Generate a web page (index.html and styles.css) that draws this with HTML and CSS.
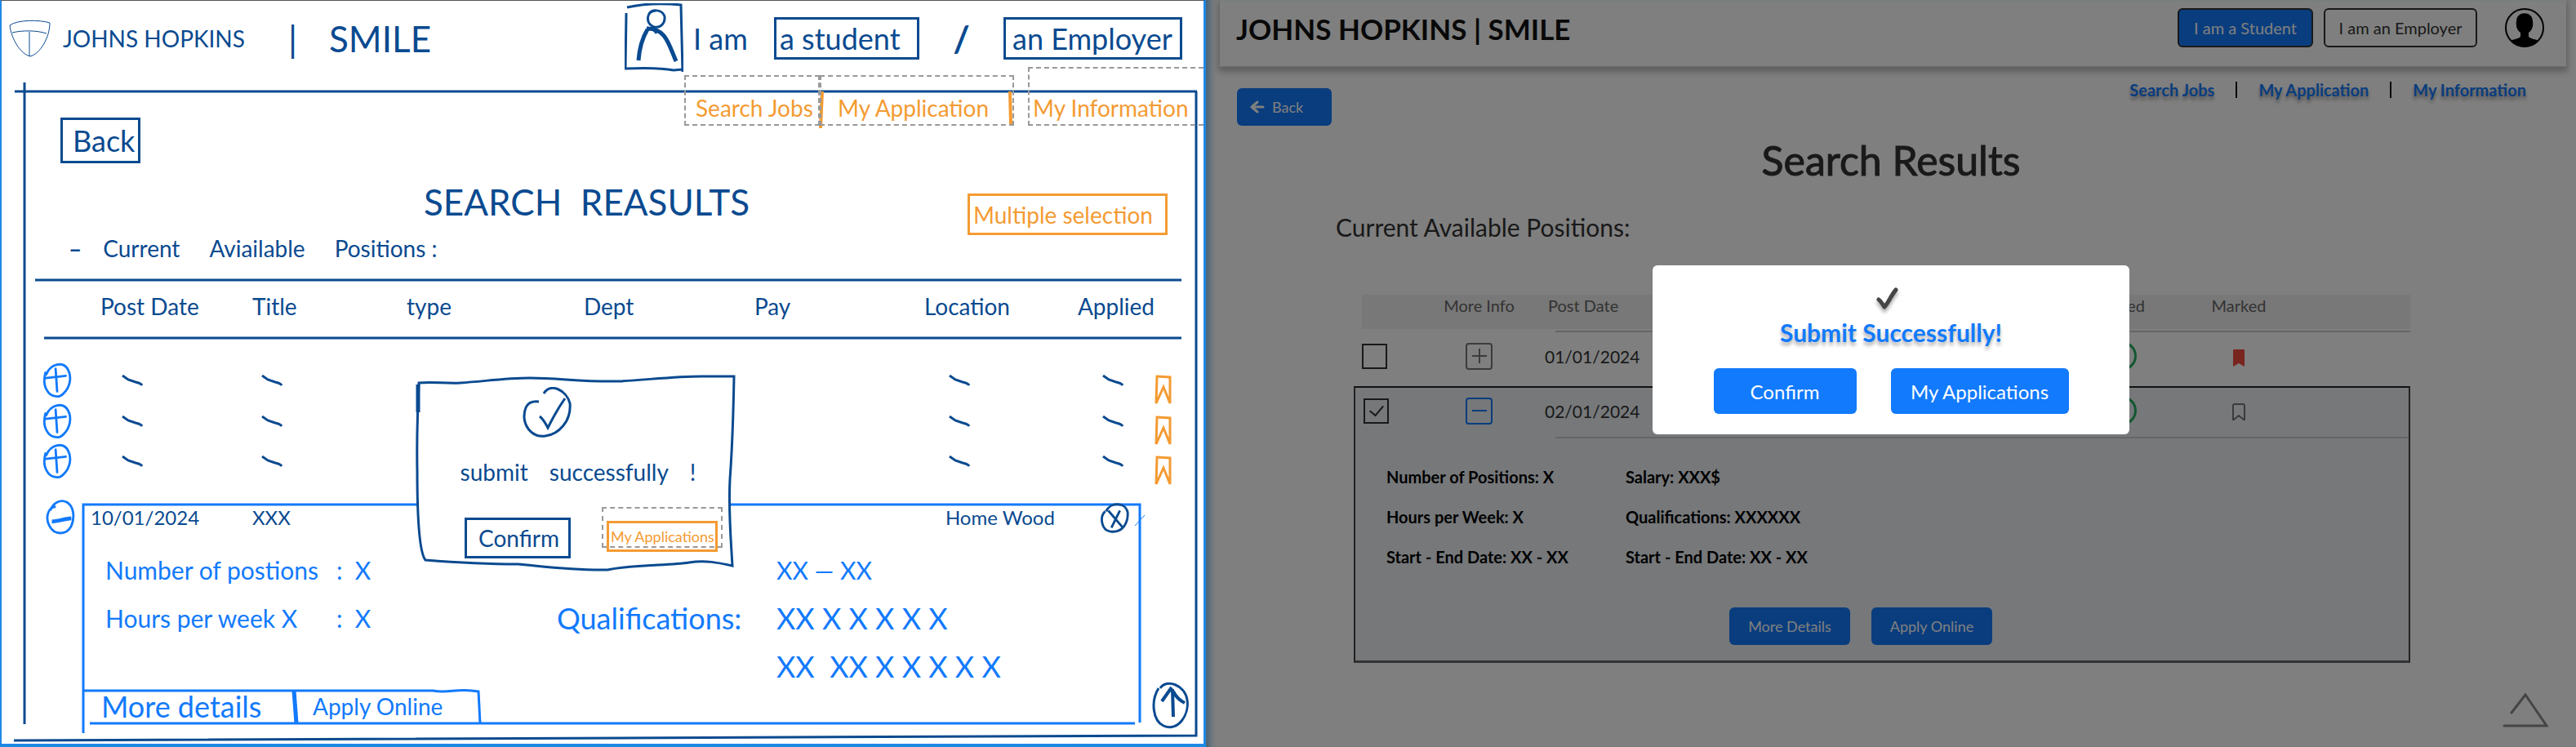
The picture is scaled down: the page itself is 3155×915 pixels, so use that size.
FILE: index.html
```html
<!DOCTYPE html>
<html lang="en">
<head>
<meta charset="utf-8">
<title>SMILE – Search Results</title>
<link rel="stylesheet" href="styles.css">
</head>
<body>
<svg class="defs" aria-hidden="true">
  <symbol id="tick" viewBox="0 0 26 14"><path d="M1 1L8 6L17 9C22 10 24 11 25 13" fill="none" stroke="currentColor" stroke-width="3"/></symbol>
  <symbol id="plus" viewBox="0 0 40 46"><path d="M5 13C3 20 2 28 7 36c4 7 14 11 21 4 9-8 11-22 6-31C28-2 12 1 6 15M5 20l26-3M18 8l2 29" fill="none" stroke="currentColor" stroke-width="3" stroke-linecap="round"/></symbol>
  <symbol id="ribbon" viewBox="0 0 22 38"><path d="M3 2l16 1 0 32-8-20L2 35z" fill="none" stroke="currentColor" stroke-width="3"/></symbol>
</svg>

<section class="sketch" aria-label="Wireframe sketch">
  <svg class="ink" viewBox="0 0 1477 915" preserveAspectRatio="none" aria-hidden="true">
    <g fill="none" stroke="#0a4a90" stroke-width="3">
      <path d="M18 112H1466M43 343H1447M54 414H1447"/>
      <path d="M30 101V887M1465 112V901L17 907"/>
    </g>
    <g fill="none" stroke="#f49b33" stroke-width="4"><path d="M1007 112L1005 157M1237 112L1238 152"/></g>
    <g fill="none" stroke="#127afc" stroke-width="3">
      <path d="M102 898V618H1396V885M102 846H530C550 850 560 842 586 847L588 886M110 886H1390"/>
      <path d="M1390 644l12-13" stroke-width="1"/>
      <path d="M360 846L363 886" stroke-width="5"/>
    </g>
  </svg>

  <header class="s-head">
    <svg class="s-logo" viewBox="0 0 52 46" fill="none" stroke="#0a4a90" stroke-width="1"><path d="M1 7C10 0 38 0 50 4C50 22 38 42 26 45C14 42 3 24 1 7zM4 16C16 13 34 13 46 17M25 15V45"/></svg>
    <span class="s-brand">JOHNS HOPKINS</span>
    <span class="s-bar">|</span>
    <span class="s-smile">SMILE</span>
    <svg class="s-person" viewBox="0 0 72 86" fill="none" stroke="#0a4a90" stroke-width="3"><path d="M3 5C25 0 50 0 69 2L71 84M2 12L1 80C25 79 45 79 60 82L71 81"/><path d="M30 13C32 7 46 7 49 16C50 26 42 32 34 28C26 24 26 10 38 9"/><path d="M34 30L40 36M28 32C22 42 18 56 17 70M27 31C50 30 54 50 63 71" stroke-width="5"/></svg>
    <span class="s-iam">I am</span>
    <button class="s-box s-student">a student</button>
    <span class="s-slash">/</span>
    <button class="s-box s-employer">an Employer</button>
  </header>

  <nav class="s-nav">
    <a class="s-link s-link-jobs" href="#">Search Jobs</a>
    <a class="s-link s-link-app" href="#">My Application</a>
    <a class="s-link s-link-info" href="#">My Information</a>
  </nav>

  <button class="s-box s-back">Back</button>

  <div class="s-titles">
    <h2 class="s-title">SEARCH &nbsp;REASULTS</h2>
    <button class="s-box s-multi">Multiple selection</button>
  </div>
  <p class="s-sub"><span>–</span><span>Current</span><span>Aviailable</span><span>Positions :</span></p>

  <table class="s-table">
    <colgroup><col class="k0"><col class="k1"><col class="k2"><col><col class="k4"><col class="k5"><col class="k6"><col class="k7"><col class="k8"></colgroup>
    <thead><tr><td></td><th class="in">Post Date</th><th>Title</th><th>type</th><th>Dept</th><th>Pay</th><th>Location</th><th>Applied</th><td></td></tr></thead>
    <tbody>
      <tr><td class="c-plus"><svg><use href="#plus"/></svg></td><td class="t1"><svg><use href="#tick"/></svg></td><td class="t2"><svg><use href="#tick"/></svg></td><td></td><td></td><td></td><td class="t3"><svg><use href="#tick"/></svg></td><td class="t3"><svg><use href="#tick"/></svg></td><td class="c-rib"><svg><use href="#ribbon"/></svg></td></tr>
      <tr><td class="c-plus"><svg><use href="#plus"/></svg></td><td class="t1"><svg><use href="#tick"/></svg></td><td class="t2"><svg><use href="#tick"/></svg></td><td></td><td></td><td></td><td class="t3"><svg><use href="#tick"/></svg></td><td class="t3"><svg><use href="#tick"/></svg></td><td class="c-rib"><svg><use href="#ribbon"/></svg></td></tr>
      <tr><td class="c-plus"><svg><use href="#plus"/></svg></td><td class="t1"><svg><use href="#tick"/></svg></td><td class="t2"><svg><use href="#tick"/></svg></td><td></td><td></td><td></td><td class="t3"><svg><use href="#tick"/></svg></td><td class="t3"><svg><use href="#tick"/></svg></td><td class="c-rib"><svg><use href="#ribbon"/></svg></td></tr>
      <tr class="s-open"><td class="c-plus c-minus"><svg viewBox="0 0 40 46" fill="none" stroke="currentColor" stroke-width="3"><path d="M14 9C2 10 1 26 6 34c6 12 22 12 28 0 5-12 3-26-6-31C20-1 10 4 7 14"/><path d="M9 28C16 28 24 25 34 24" stroke-width="5"/></svg></td><td>10/01/2024</td><td>XXX</td><td></td><td></td><td></td><td class="hw">Home Wood</td><td class="cx"><svg viewBox="0 0 38 40" fill="none" stroke="currentColor" stroke-width="3"><path d="M7 12C0 18 1 36 14 38C30 40 37 26 36 13C33 0 14-1 8 12M11 11L29 32M26 11L15 33"/></svg></td><td></td></tr>
    </tbody>
  </table>

  <div class="s-details">
    <p class="s-pair"><span>Number of postions</span>: &nbsp;X</p><span></span><span>XX — XX</span>
    <p class="s-pair"><span>Hours per week X</span>: &nbsp;X</p><span class="s-wide">Qualifications:</span><span class="s-wide">XX X X X X X</span>
    <span></span><span></span><span class="s-wide">XX &nbsp;XX X X X X X</span>
  </div>
  <div class="s-actions">
    <button class="s-act s-more">More details</button>
    <button class="s-act s-apply">Apply Online</button>
  </div>

  <button class="s-up" aria-label="Back to top"><svg viewBox="0 0 46 58" fill="none" stroke="#0a4a90" stroke-width="4"><path d="M8 8C-2 24 1 48 14 54C32 62 46 40 43 22C40 4 18-4 10 8" stroke-width="3"/><path d="M25 9L26 43M12 24L24 7M26 12C30 20 34 23 40 26"/></svg></button>

  <div class="s-modal" role="dialog" aria-label="Submit successfully">
    <svg class="s-modal-ink" viewBox="0 0 398 244" preserveAspectRatio="none" aria-hidden="true"><path d="M4 12C20 10 35 13 55 12C85 10 110 6 140 6C175 6 205 11 250 10C285 8 320 4 350 4L390 4C389 60 388 90 385 130C383 170 386 200 388 236C370 232 355 229 335 232C310 236 270 234 235 241C190 242 150 236 125 234C85 234 50 232 12 229C5 220 2 180 2 120C1 70 3 40 4 12z" fill="#fff" stroke="#0a4a90" stroke-width="3"/><path d="M3 14V48" stroke="#0a4a90" stroke-width="5"/></svg>
    <svg class="s-check" viewBox="0 0 60 62" fill="none" stroke="#0a4a90" stroke-width="3"><path d="M20 18C4 16 2 28 2 38C4 54 16 62 28 60C44 58 60 42 58 20C54 4 34-6 26 8M21 36C26 40 28 44 31 50C36 40 42 28 52 14"/></svg>
    <p class="s-modal-text"><span>submit</span><span>successfully</span><span>!</span></p>
    <div class="s-modal-actions">
      <button class="s-box s-confirm">Confirm</button>
      <span class="s-dash"><button class="s-box s-apps">My Applications</button></span>
    </div>
  </div>
</section>

<section class="app">
  <header class="head">
    <h1 class="brand">JOHNS HOPKINS | SMILE</h1>
    <button class="role role-on">I am a Student</button>
    <button class="role">I am an Employer</button>
    <svg class="avatar" viewBox="0 0 48 48"><circle cx="24" cy="24" r="23" fill="none" stroke="#000" stroke-width="2"/><path d="M14 16C14 3 34 3 34 16C35 23 33 27 29 30V35C32 38 38 38 41 40A23 23 0 0 1 7 40C10 38 16 38 19 35V30C15 27 13 23 14 16z"/></svg>
  </header>
  <div class="sub">
    <button class="btn back"><svg viewBox="0 0 18 16" fill="none" stroke="currentColor" stroke-width="3" stroke-linecap="round" stroke-linejoin="round"><path d="M9 2L2 8l7 6M3 8h13"/></svg>Back</button>
    <nav class="nav"><a href="#">Search Jobs</a><i></i><a href="#">My Application</a><i></i><a href="#">My Information</a></nav>
  </div>
  <h2 class="title">Search Results</h2>
  <h3 class="caption">Current Available Positions:</h3>

  <table class="jobs">
    <colgroup><col class="j1"><col class="j2"><col class="j3"><col><col class="j5"><col class="j6"><col class="j7"></colgroup>
    <thead><tr><td class="h0"></td><th>More Info</th><th class="date">Post Date</th><td></td><th class="applied">Applied</th><th>Marked</th><td></td></tr></thead>
    <tbody>
      <tr class="job">
        <td class="pick"><input type="checkbox" aria-label="Select 01/01/2024"></td>
        <td><button class="toggle" aria-label="Show details"><svg viewBox="0 0 18 18" stroke="currentColor" stroke-width="2"><path d="M0 9h18M9 0v18"/></svg></button></td>
        <td class="date">01/01/2024</td><td></td>
        <td><span class="ring"></span></td>
        <td><svg class="mark" viewBox="0 0 16 22"><path d="M1 2a1 1 0 0 1 1-1h12a1 1 0 0 1 1 1v20l-7-4-7 4z" fill="#f0483e"/></svg></td><td></td>
      </tr>
      <tr class="job open">
        <td class="pick"><input type="checkbox" checked aria-label="Select 02/01/2024"></td>
        <td><button class="toggle on" aria-label="Hide details"><svg viewBox="0 0 18 18" stroke="currentColor" stroke-width="2"><path d="M0 9h18"/></svg></button></td>
        <td class="date">02/01/2024</td><td></td>
        <td><span class="ring"></span></td>
        <td><svg class="mark" viewBox="0 0 16 22"><path d="M1 3a2 2 0 0 1 2-2h10a2 2 0 0 1 2 2v17h-1l-6-5-6 5H1z" fill="none" stroke="#777" stroke-width="2"/></svg></td><td></td>
      </tr>
      <tr class="more"><td colspan="7">
        <div class="facts">
          <span>Number of Positions: X</span><span>Salary: XXX$</span>
          <span>Hours per Week: X</span><span>Qualifications: XXXXXX</span>
          <span>Start - End Date: XX - XX</span><span>Start - End Date: XX - XX</span>
        </div>
        <div class="acts"><button class="btn">More Details</button><button class="btn">Apply Online</button></div>
      </td></tr>
    </tbody>
  </table>

  <button class="up" aria-label="Back to top"><svg viewBox="0 0 56 42" fill="none" stroke="#8a8a8a" stroke-width="3" stroke-linecap="round"><path d="M11 24L28 2L54 40H2"/></svg></button>

  <div class="veil">
    <div class="modal" role="dialog" aria-label="Submit Successfully">
      <svg class="ok" viewBox="0 0 28 28" fill="none" stroke="#454545" stroke-width="5" stroke-linecap="round" stroke-linejoin="round"><path d="M3 15c3 2 4 5 7 9C15 19 18 10 24 3"/></svg>
      <p class="done">Submit Successfully!</p>
      <div class="choices"><button class="big confirm">Confirm</button><button class="big apps">My Applications</button></div>
    </div>
  </div>
</section>
</body>
</html>
```

FILE: styles.css
```css
* { box-sizing: border-box; }
body { margin: 0; min-height: 100vh; display: flex; background: #fff; font-family: Lato, "Open Sans", sans-serif; }
button { font: inherit; color: inherit; background: none; border: 0; padding: 0; cursor: pointer; white-space: nowrap; }
a { text-decoration: none; }
p, h1, h2, h3 { margin: 0; }
.defs { position: absolute; width: 0; height: 0; }

/* Hand-drawn wireframe */
.sketch {
  position: relative; flex: 0 0 46.815%; display: flex; flex-direction: column; min-width: 0;
  border: solid #1e88e5; border-width: 1px 3px 4px 2px; border-top-color: #555;
  color: #0a4a90; font-size: 28px; line-height: 32px; white-space: nowrap;
}
.ink { position: absolute; top: -1px; left: -2px; width: calc(100% + 5px); height: calc(100% + 5px); pointer-events: none; }
.sketch > :not(.ink) { z-index: 1; }
.s-box { border: 3px solid #0a4a90; text-align: left; padding-left: 4px; }
.s-head { display: flex; align-items: center; height: 91px; padding: 0 26px 0 9px; font-size: 36px; }
.s-logo { width: 52px; height: 46px; }
.s-brand { width: 276px; margin-left: 14px; font-size: 28px; }
.s-bar { width: 50px; font-size: 44px; }
.s-smile { font-size: 44px; }
.s-person { width: 72px; height: 86px; margin-left: auto; }
.s-iam { width: 111px; padding-left: 12px; }
.s-student { width: 178px; height: 52px; }
.s-slash { width: 103px; text-align: center; font-size: 44px; font-weight: 700; }
.s-employer { width: 219px; height: 52px; padding-left: 8px; }
.s-nav { display: flex; justify-content: flex-end; height: 62px; }
.s-link { display: flex; align-items: flex-end; color: #f49b33; border: 2px dashed #999; padding: 0 0 4px 12px; }
.s-link-jobs { width: 166px; }
.s-link-app { width: 238px; padding-left: 20px; }
.s-link-info { width: 215px; margin: -10px 0 0 17px; padding-left: 4px; border-right: 0; }
.s-back { width: 98px; height: 56px; margin: -10px 0 0 72px; padding-left: 12px; font-size: 36px; }
.s-titles { display: flex; align-items: flex-end; justify-content: space-between; height: 63px; margin: 25px 44px 0 517px; }
.s-title { align-self: flex-start; font-size: 44px; line-height: 45px; font-weight: 400; }
.s-multi { width: 245px; height: 51px; border-color: #f49b33; color: #f49b33; }
.s-sub { display: flex; gap: 36px; height: 32px; margin: 0 0 23px 82px; }
.s-sub span:first-child { margin-right: -10px; font-weight: 700; }
.s-table { table-layout: fixed; border-spacing: 0; margin: 0 28px 0 41px; }
.s-table th { font-weight: 400; text-align: left; padding: 0 0 8px; }
.s-table td { padding: 0; height: 49px; }
.s-table thead tr > * { height: 72px; }
.s-table tbody tr:first-child td { height: 76px; padding-top: 26px; }
.s-table tbody tr.s-open td { height: 76px; padding-top: 14px; font-size: 24px; }
.s-table svg { display: block; width: 26px; height: 14px; }
.k0 { width: 68px; } .k1 { width: 198px; } .k2 { width: 189px; } .k4 { width: 209px; } .k5 { width: 208px; } .k6 { width: 188px; } .k7 { width: 92px; } .k8 { width: 32px; }
.s-table .in { padding-left: 12px; }
.s-table .t1 { padding-left: 38px; }
.s-table .t2 { padding-left: 11px; }
.s-table .t3 { padding-left: 30px; }
.s-table .hw { padding-left: 26px; }
.s-table .cx { padding-left: 27px; }
.s-table .cx svg { width: 36px; height: 38px; }
.s-table .c-plus { padding-left: 8px; color: #127afc; }
.s-table .c-minus { padding-left: 12px; }
.s-table .c-plus svg { width: 38px; height: 44px; }
.s-table .c-rib { color: #f49b33; }
.s-table .c-rib svg { width: 22px; height: 38px; margin-bottom: -24px; }
.s-details { display: grid; grid-template-columns: 553px 269px 1fr; grid-auto-rows: 59px; align-items: center; margin: 3px 0 0 127px; color: #127afc; font-size: 30px; }
.s-wide { font-size: 36px; }
.s-pair { display: flex; }
.s-pair span { width: 283px; }
.s-actions { display: flex; height: 40px; margin-left: 100px; color: #127afc; }
.s-act { text-align: left; padding-left: 22px; }
.s-more { width: 259px; font-size: 36px; }
.s-up { position: absolute; right: 17px; bottom: 18px; width: 46px; height: 58px; }
.s-up svg { display: block; }
.s-modal { position: absolute; left: calc(50% - 229px); top: 456px; width: 398px; height: 244px; display: flex; flex-direction: column; align-items: center; padding: 17px 0 0; }
.s-modal-ink { position: absolute; inset: 0; width: 100%; height: 100%; z-index: -1; }
.s-check { width: 60px; height: 62px; margin-right: 76px; }
.s-modal-text { display: flex; gap: 26px; margin: 26px 0 0; }
.s-modal-actions { display: flex; align-items: flex-start; align-self: flex-start; gap: 38px; margin: 40px 0 0 60px; }
.s-confirm { width: 130px; height: 50px; padding-left: 14px; }
.s-dash { height: 50px; width: 148px; border: 2px dashed #999; padding: 15px 0 0 4px; display: block; margin-top: -13px; }
.s-apps { display: block; width: 136px; height: 38px; padding-left: 2px; border-color: #f49b33; color: #f49b33; font-size: 18px; }

/* Application screen */
.app { position: relative; flex: 1 1 0; min-width: 0; display: flex; flex-direction: column; background: #fff; color: #333; box-shadow: inset 10px 0 10px -6px #7ab8f0; white-space: nowrap; }
.head { display: flex; align-items: flex-start; height: 82px; margin: 0 12px 0 17px; padding: 10px 27px 0 20px; box-shadow: 0 4px 8px 2px #bbb; border-bottom: 1px solid #ddd; }
.brand { margin-right: auto; color: #111; font-size: 35px; line-height: 50px; font-weight: 700; }
.role { height: 48px; width: 188px; border: 2px solid #333; border-radius: 6px; font-size: 20px; color: #333; }
.role-on { width: 166px; margin-right: 13px; background: #127afc; color: #fff; }
.avatar { width: 48px; height: 48px; margin-left: 34px; }
.sub { display: flex; justify-content: space-between; align-items: flex-start; padding: 26px 61px 0 38px; }
.btn { height: 46px; width: 148px; border-radius: 6px; background: #127afc; color: #fff; font-size: 18px; }
.back { width: 116px; display: flex; align-items: center; gap: 9px; padding-left: 16px; }
.back svg { width: 18px; height: 16px; }
.nav { display: flex; align-items: center; gap: 26px; margin-top: -10px; font-size: 20px; line-height: 24px; font-weight: 700; text-shadow: 0 4px 4px #999; }
.nav a { color: #127afc; }
.nav i { width: 2px; height: 20px; background: #111; }
.title { margin-top: 10px; text-align: center; font-size: 50px; line-height: 64px; font-weight: 400; -webkit-text-stroke: 1px; }
.caption { margin: 32px 0 0 159px; font-size: 30px; line-height: 36px; font-weight: 400; }
.jobs { table-layout: fixed; border-spacing: 0; margin: 65px 203px 0 181px; font-size: 20px; }
.jobs td, .jobs th { padding: 0; text-align: center; }
.j1 { width: 107px; } .j2 { width: 93px; } .j3 { width: 162px; } .j5 { width: 82px; } .j6 { width: 204px; } .j7 { width: 108px; }
.jobs thead tr > * { height: 42px; padding-bottom: 16px; background: #f0f0f0; font-weight: 400; color: #666; line-height: 24px; }
.jobs thead .h0 { background-clip: padding-box; border-left: 10px solid transparent; }
.jobs .date { text-align: left; padding-left: 34px; }
.jobs thead .date { padding-left: 38px; }
.jobs .applied { text-align: right; padding-right: 13px; }
.job td { height: 70px; padding-bottom: 4px; background: linear-gradient(#ccc, #ccc) no-repeat 0 2px / 100% 2px; }
.job td:nth-child(-n+2) { background: none; }
.job .date { background-position: 47px 2px; font-size: 21px; }
.jobs .pick { text-align: left; padding-left: 10px; }
.job.open td { height: 64px; padding-bottom: 6px; border-top: 2px solid #222; background-color: #edf1f5; background-position: 0 100%; }
.job.open td:nth-child(-n+2) { background: #edf1f5; }
.job.open .date { background-position: 47px 100%; }
.job.open td:first-child, .more td { border-left: 2px solid #444; }
.job.open td:last-child, .more td { border-right: 2px solid #444; }
.pick input { appearance: none; display: grid; place-items: center; width: 31px; height: 31px; margin: 0; border: 2px solid #333; }
.pick input:checked::after { content: ""; width: 8px; height: 14px; margin-bottom: 4px; border: solid #333; border-width: 0 2px 2px 0; rotate: 40deg; }
.toggle { width: 33px; height: 33px; border: 2px solid #777; border-radius: 4px; color: #777; vertical-align: middle; }
.toggle svg { display: block; width: 18px; margin: 0 auto; }
.toggle.on { border-color: #127afc; color: #127afc; }
.ring { display: inline-block; width: 36px; height: 36px; border: 3px solid #27ae60; border-radius: 50%; vertical-align: middle; }
.mark { width: 16px; height: 22px; vertical-align: middle; }
.jobs .more td { height: 275px; vertical-align: top; text-align: left; border-bottom: 3px solid #666; background: #edf1f5; }
.facts { display: grid; grid-template-columns: 293px 1fr; grid-auto-rows: 49px; align-items: center; padding: 22px 0 0 38px; font-weight: 700; color: #000; }
.acts { display: flex; justify-content: center; gap: 26px; margin: 38px 52px 0 0; }
.up { position: absolute; right: 34px; bottom: 24px; width: 56px; height: 42px; }
.up svg { display: block; }
.veil { position: absolute; inset: 0; display: flex; align-items: center; justify-content: center; padding-bottom: 58px; background: rgba(0, 0, 0, .5); }
.modal { width: 584px; height: 207px; border-radius: 6px; background: #fff; display: flex; flex-direction: column; align-items: center; padding-top: 27px; }
.ok { width: 28px; height: 28px; margin-right: 8px; filter: drop-shadow(0 4px 2px #aaa); }
.done { margin-top: 7px; color: #127afc; font-size: 30px; line-height: 40px; font-weight: 700; text-shadow: 0 4px 4px #aaa; }
.choices { display: flex; gap: 42px; margin-top: 24px; }
.big { height: 56px; border-radius: 6px; background: #127afc; color: #fff; font-size: 24px; }
.confirm { width: 175px; }
.apps { width: 218px; }
```
